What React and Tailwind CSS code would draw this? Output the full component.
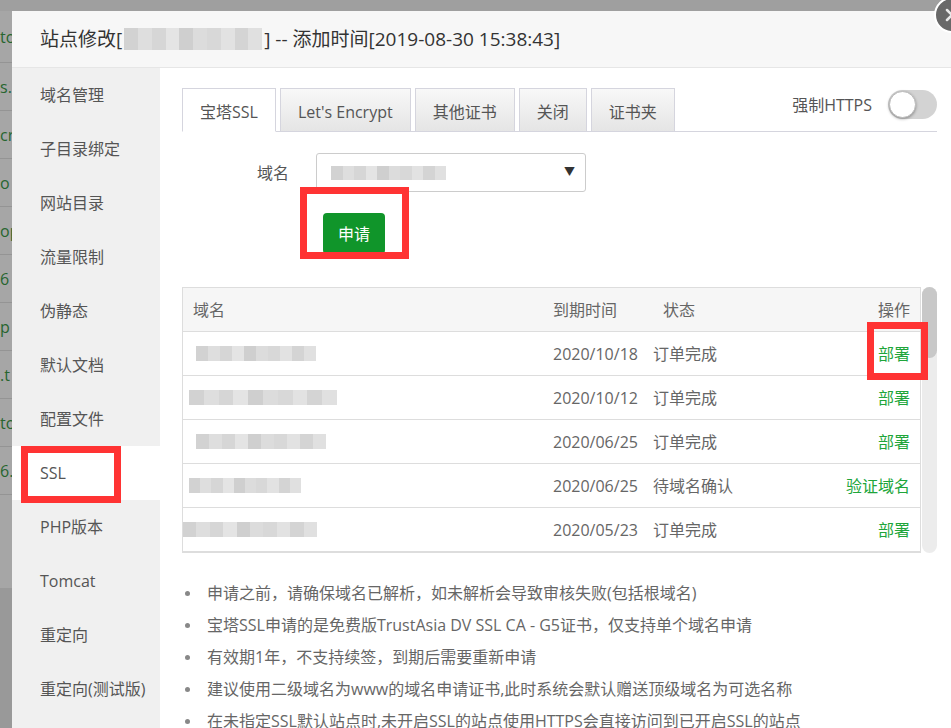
import { X } from "lucide-react";

const FONT = "font-['Open_Sans','Noto_Sans_CJK_SC',sans-serif]";

const sideItems = [
  "域名管理",
  "子目录绑定",
  "网站目录",
  "流量限制",
  "伪静态",
  "默认文档",
  "配置文件",
  "SSL",
  "PHP版本",
  "Tomcat",
  "重定向",
  "重定向(测试版)",
];

const tabs = ["宝塔SSL", "Let's Encrypt", "其他证书", "关闭", "证书夹"];

const rows = [
  { date: "2020/10/18", status: "订单完成", action: "部署", blur: "w-[120px] ml-[13px]" },
  { date: "2020/10/12", status: "订单完成", action: "部署", blur: "w-[148px] ml-[6px]" },
  { date: "2020/06/25", status: "订单完成", action: "部署", blur: "w-[130px] ml-[13px]" },
  { date: "2020/06/25", status: "待域名确认", action: "验证域名", blur: "w-[112px] ml-[6px]" },
  { date: "2020/05/23", status: "订单完成", action: "部署", blur: "w-[134px] ml-[0px]" },
];

const notes = [
  "申请之前，请确保域名已解析，如未解析会导致审核失败(包括根域名)",
  "宝塔SSL申请的是免费版TrustAsia DV SSL CA - G5证书，仅支持单个域名申请",
  "有效期1年，不支持续签，到期后需要重新申请",
  "建议使用二级域名为www的域名申请证书,此时系统会默认赠送顶级域名为可选名称",
  "在未指定SSL默认站点时,未开启SSL的站点使用HTTPS会直接访问到已开启SSL的站点",
];

const stripText = ["to", "s.", "cr", "o", "op", "6", "p", ".t", "to", "6."];

const shades = [
  "bg-[#d2d2d2]",
  "bg-[#dedede]",
  "bg-[#d6d6d6]",
  "bg-[#e4e4e4]",
  "bg-[#cfcfcf]",
  "bg-[#dcdcdc]",
  "bg-[#d8d8d8]",
  "bg-[#e2e2e2]",
  "bg-[#d4d4d4]",
  "bg-[#e0e0e0]",
];

// pixelated blur used to hide domain names
function Mosaic({ className = "", h = "h-[15px]" }) {
  return (
    <div className={`relative flex overflow-hidden ${h} ${className}`}>
      <div className="absolute -inset-[4px] rounded-full bg-[#f4f4f4] blur-[3px]" />
      {shades.map((s, i) => (
        <div key={i} className={`relative h-full flex-1 ${s}`} />
      ))}
    </div>
  );
}

export default function App() {
  return (
    <div
      className={`relative flex h-[728px] w-[951px] flex-col overflow-hidden bg-[#a0a0a0] ${FONT}`}
    >
      {/* background page peeking out */}
      <div className="h-[11px] shrink-0 bg-[#9f9f9f]" />

      <div className="flex min-h-0 flex-1">
        <div className="flex w-[12px] shrink-0 flex-col bg-[#999]">
          <div className="flex flex-col bg-[#a6a6a6]">
            {stripText.map((t, i) => (
              <div
                key={i}
                className={`flex items-center overflow-hidden border-b border-[#949494] text-[16px] leading-none text-[#27652f] ${
                  i === 0 ? "h-[52px]" : "h-[48px]"
                }`}
              >
                <span className="whitespace-nowrap">{t}</span>
              </div>
            ))}
            <div className="h-[93px]" />
          </div>
        </div>

        {/* modal */}
        <div className="flex min-w-0 flex-1 flex-col bg-white">
          <div className="flex h-[57px] shrink-0 items-center border-b border-[#e6e6e6] bg-[#f7f7f7] pl-[28px] text-[19px] text-[#333]">
            <span>站点修改[</span>
            <Mosaic className="mx-[2px] w-[138px]" h="h-[22px]" />
            <span className="whitespace-nowrap">] -- 添加时间[2019-08-30 15:38:43]</span>
          </div>

          <div className="flex min-h-0 flex-1">
            {/* sidebar */}
            <div className="flex w-[148px] shrink-0 flex-col bg-[#f0f0f0]">
              {sideItems.map((item) => (
                <div
                  key={item}
                  className={`flex h-[54px] shrink-0 items-center pl-[28px] text-[16px] text-[#555] ${
                    item === "SSL" ? "bg-white" : ""
                  }`}
                >
                  {item}
                </div>
              ))}
            </div>

            {/* content */}
            <div className="min-w-0 flex-1 pl-[22px] pr-[14px] pt-[20px]">
              <div className="flex items-start justify-between border-b border-[#d5d5de]">
                <div className="-mb-px flex gap-[4px]">
                  {tabs.map((t, i) => (
                    <div
                      key={t}
                      className={`flex h-[44px] items-center border border-[#d5d5de] px-[17px] pt-[3px] text-[16px] text-[#555] ${
                        i === 0
                          ? "border-b-white bg-white"
                          : "bg-gradient-to-b from-[#f8f8f8] to-[#e5e5e5]"
                      }`}
                    >
                      {t}
                    </div>
                  ))}
                </div>
                <div className="mt-[2px] flex items-center gap-[16px]">
                  <span className="text-[16px] text-[#555]">强制HTTPS</span>
                  <div className="flex h-[29px] w-[49px] items-center rounded-full bg-[#d3d3d3] pl-[1px]">
                    <div className="h-[27px] w-[27px] rounded-full border border-[#bbb] bg-white shadow-[0_1px_3px_rgba(0,0,0,0.35)]" />
                  </div>
                </div>
              </div>

              <div className="mt-[21px] flex items-center">
                <span className="w-[107px] text-right text-[16px] text-[#555]">域名</span>
                <div className="ml-[27px] flex h-[39px] w-[270px] items-center justify-between rounded-[3px] border border-[#ccc] pl-[14px] pr-[10px]">
                  <Mosaic className="w-[115px]" h="h-[14px]" />
                  <span className="text-[11px] text-[#333]">▼</span>
                </div>
              </div>

              <div className="ml-[141px] mt-[21px]">
                <button className="h-[41px] w-[62px] rounded-[4px] bg-[#10952a] text-[16px] text-white">
                  申请
                </button>
              </div>

              {/* certificate table */}
              <div className="mt-[33px] flex h-[266px] gap-[1px]">
                <div className="w-[739px] overflow-hidden border border-[#ddd] text-[16px] text-[#666]">
                  <div className="grid h-[44px] grid-cols-[360px_110px_1fr_auto] items-center border-b border-[#ddd] bg-[#f6f6f6] px-[10px]">
                    <span>域名</span>
                    <span>到期时间</span>
                    <span>状态</span>
                    <span className="text-right">操作</span>
                  </div>
                  {rows.map((r, i) => (
                    <div
                      key={i}
                      className="grid h-[44px] grid-cols-[360px_110px_1fr_auto] items-center border-b border-[#ddd] pr-[10px]"
                    >
                      <div>
                        <Mosaic className={r.blur} h="h-[15px]" />
                      </div>
                      <span className="pl-[10px]">{r.date}</span>
                      <span>{r.status}</span>
                      <span className="text-right text-[#20a53a]">{r.action}</span>
                    </div>
                  ))}
                </div>
                <div className="flex w-[15px] flex-col rounded-full bg-[#ececec]">
                  <div className="h-[71px] rounded-full bg-[#c8c8c8]" />
                </div>
              </div>

              {/* notes */}
              <ul className="mt-[24px] flex flex-col text-[16px] text-[#666]">
                {notes.map((n) => (
                  <li key={n} className="flex h-[32px] items-center whitespace-nowrap">
                    <span className="ml-[3px] mr-[17px] h-[5px] w-[5px] shrink-0 rounded-full bg-[#888]" />
                    {n}
                  </li>
                ))}
              </ul>
            </div>
          </div>
        </div>
      </div>

      {/* close button */}
      <div className="absolute left-[934px] top-[-3px] flex h-[36px] w-[36px] items-center justify-center rounded-full border-2 border-white bg-[#686868]">
        <X size={20} strokeWidth={3} className="text-[#e8e8e8]" />
      </div>

      {/* red annotation boxes */}
      <div className="absolute left-[21px] top-[446px] h-[57px] w-[100px] border-[7px] border-[#f33]" />
      <div className="absolute left-[300px] top-[187px] h-[72px] w-[109px] border-[7px] border-[#f33]" />
      <div className="absolute left-[867px] top-[322px] h-[58px] w-[61px] border-[7px] border-[#f33]" />
    </div>
  );
}
